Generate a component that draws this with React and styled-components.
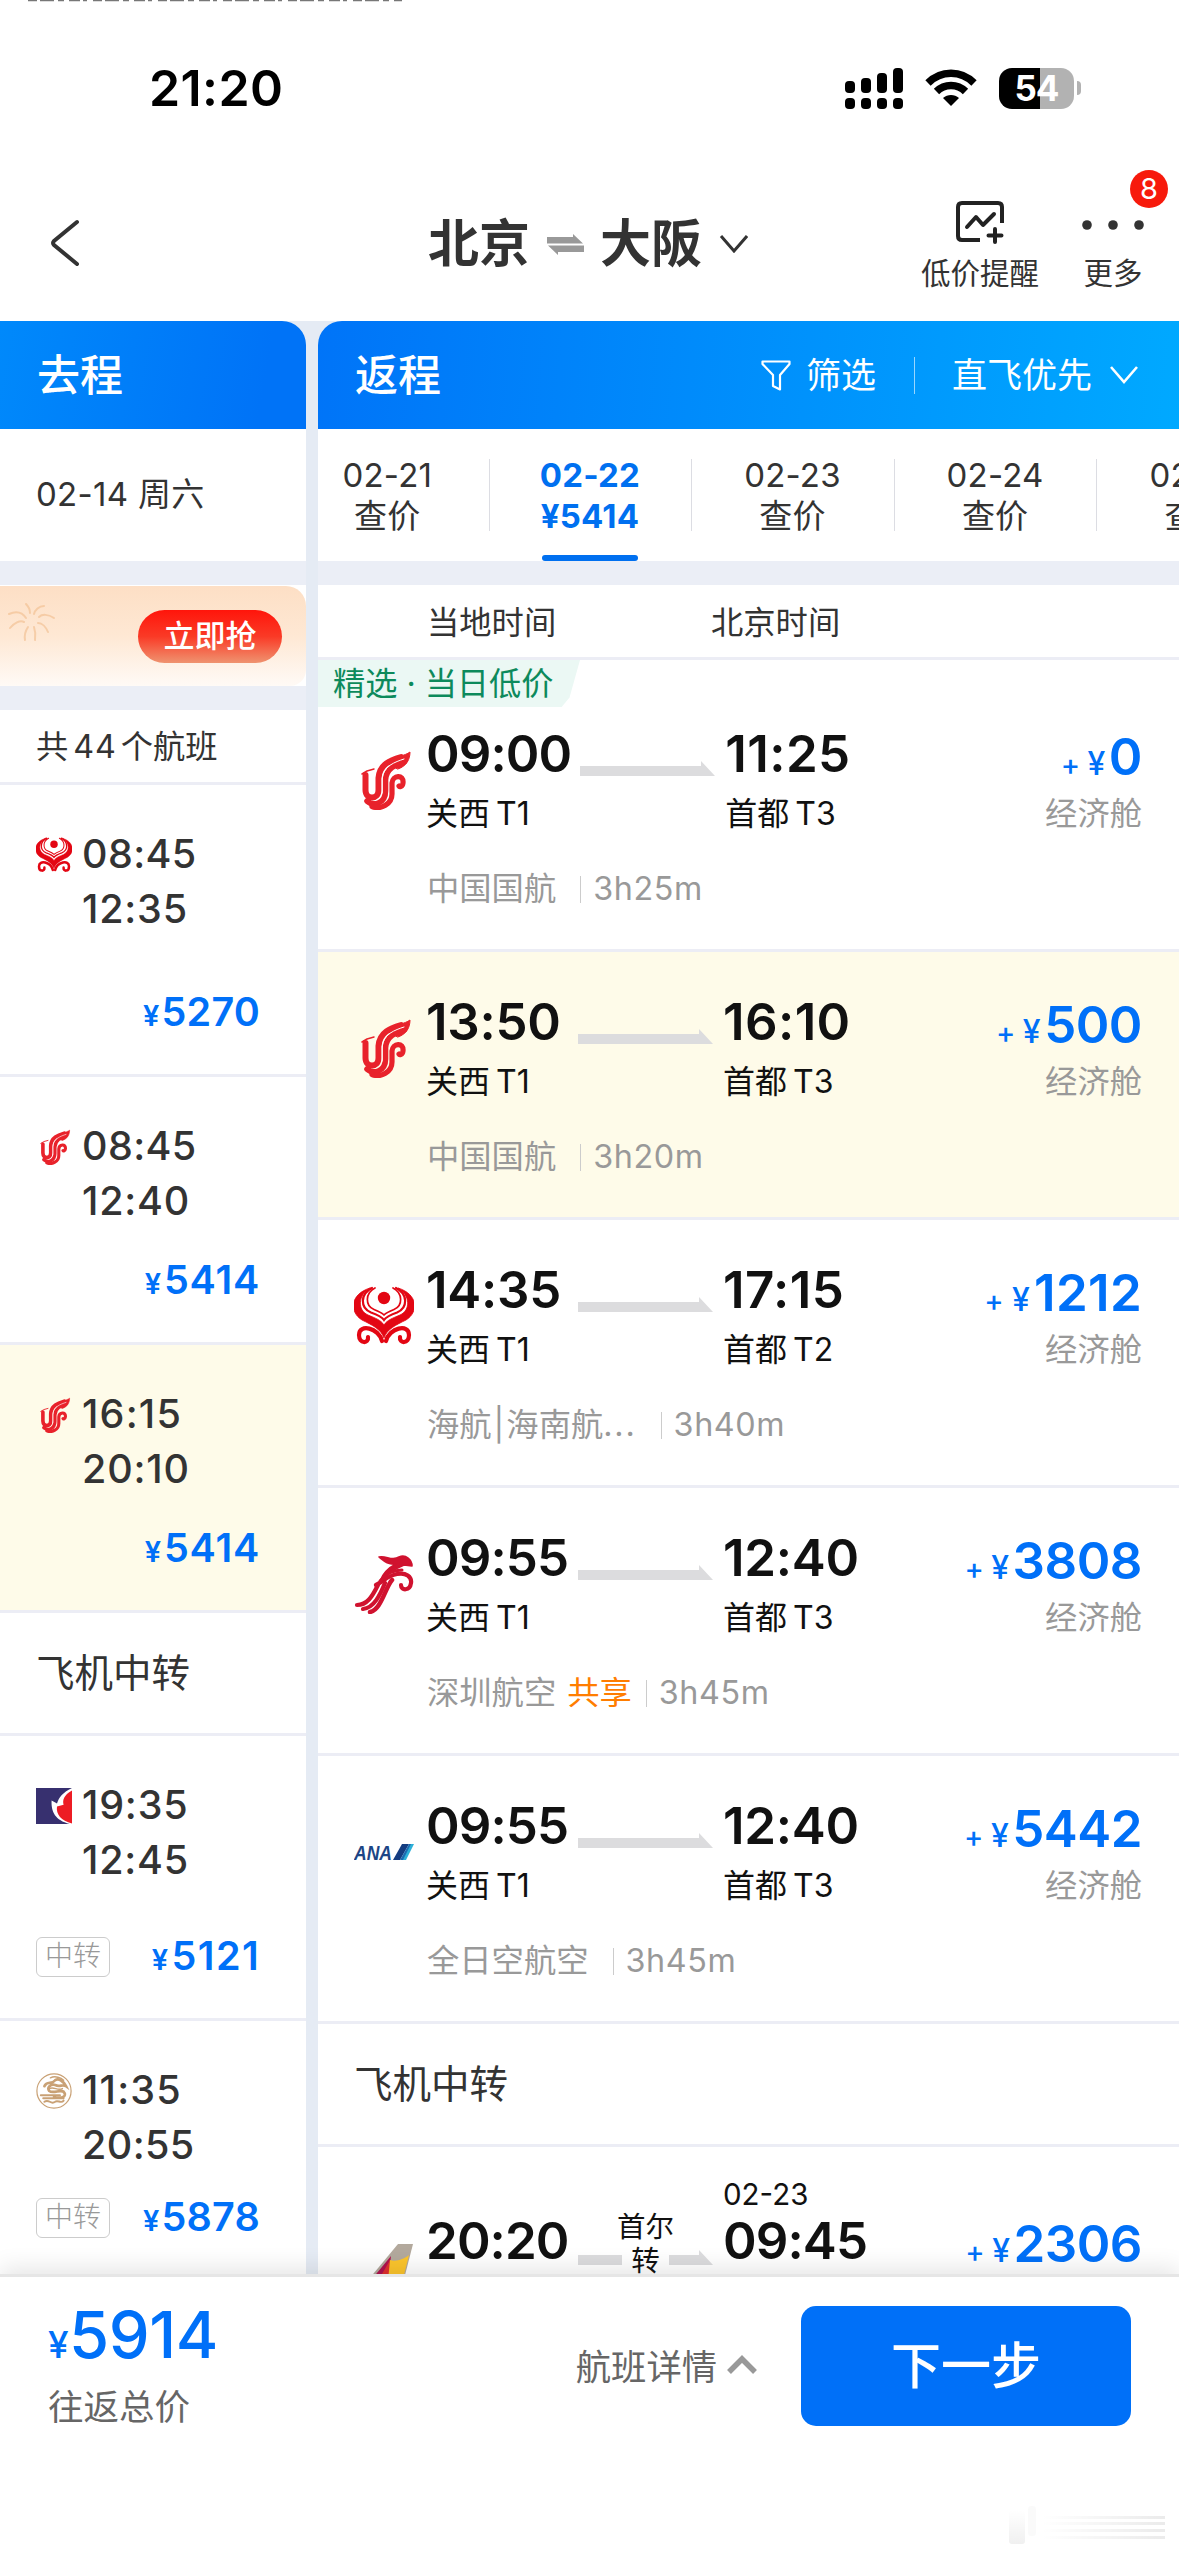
import styled, { createGlobalStyle, css } from "styled-components"

const GlobalStyle = createGlobalStyle`
  * {
    box-sizing: border-box;
  }

  body {
    margin: 0;
    background: #fff;
    font-family: "Inter", "Noto Sans CJK SC", sans-serif;
    color: #333;
  }

  svg {
    display: block;
    flex: none;
  }
`

const Screen = styled.div`
  width: 1179px;
  height: 2556px;
  display: flex;
  flex-direction: column;
  overflow: hidden;
  background: #fff;
  white-space: nowrap;
`

/* status bar */

const StatusBar = styled.div`
  height: 176px;
  display: flex;
  align-items: center;
  justify-content: space-between;
  padding: 0 98px 0 149px;
  position: relative;
`
const TopEdge = styled.svg`
  position: absolute;
  top: 0;
  left: 28px;
`
const Clock = styled.div`
  font-size: 50px;
  font-weight: 600;
  letter-spacing: 0.4px;
  line-height: 60px;
  color: #000;
`
const StatusIcons = styled.div`
  display: flex;
  align-items: center;
  gap: 22px;
`
const Battery = styled.div`
  display: flex;
  align-items: center;
  gap: 3px;

  &::after {
    content: "";
    width: 4px;
    height: 14px;
    border-radius: 0 4px 4px 0;
    background: #b2b2b2;
  }
`
const BatteryBody = styled.div`
  width: 75px;
  height: 41px;
  border-radius: 13px;
  background: linear-gradient(90deg, #000 54.5%, #b2b2b2 54.5%);
  color: #fff;
  font-size: 35px;
  font-weight: 700;
  line-height: 41px;
  letter-spacing: -1px;
  text-align: center;
`

/* nav */

const NavBar = styled.div`
  height: 145px;
  display: grid;
  grid-template-columns: 428px 1fr 258px;
`
const NavBack = styled.div`
  padding: 43px 0 0 49px;
`
const NavTitle = styled.div`
  display: flex;
  align-items: center;
  height: 136px;
  font-size: 51px;
  font-weight: 700;
  line-height: 60px;
`
const SwapIcon = styled.svg`
  margin: 0 16px 0 17px;
`
const NavActions = styled.div`
  display: flex;
  gap: 43px;
`
const NavAction = styled.div`
  display: flex;
  flex-direction: column;
  align-items: center;
  position: relative;
  font-size: 29.5px;
  line-height: 40px;
`
const ActionIcon = styled.div`
  height: 77px;
  display: flex;
  padding-top: ${({ $top }) => $top}px;
`
const Badge = styled.div`
  position: absolute;
  top: -6px;
  left: 48px;
  width: 38px;
  height: 38px;
  border-radius: 50%;
  background: #f71a0c;
  color: #fff;
  font-size: 29px;
  line-height: 38px;
  text-align: center;
`

/* columns */

const Columns = styled.div`
  height: 1953px;
  display: grid;
  grid-template-columns: 306px 861px;
  column-gap: 12px;
  background: #e5ebf4;
  overflow: hidden;
`
const Column = styled.div`
  display: flex;
  flex-direction: column;
  min-width: 0;
  overflow: hidden;
`
const ColumnHead = styled.div`
  flex: none;
  height: 108px;
  display: flex;
  align-items: center;
  padding: 0 41px 0 37px;
  color: #fff;
  border-radius: ${({ $side }) => ($side === "left" ? "0 24px 0 0" : "24px 0 0 0")};
  background: ${({ $side }) =>
    $side === "left"
      ? "linear-gradient(100deg, #0089fb, #0073f7 85%)"
      : "linear-gradient(95deg, #0074f8, #00a9ff)"};
`
const HeadTitle = styled.div`
  font-size: 43px;
  font-weight: 500;
  line-height: 54px;
  margin-right: auto;
`
const HeadTool = styled.div`
  display: flex;
  align-items: center;
  gap: ${({ $gap }) => $gap}px;
  font-size: 35px;
  line-height: 44px;
`
const HeadDivider = styled.div`
  width: 1px;
  height: 37px;
  margin: 0 37px 0 38px;
  background: rgba(255, 255, 255, 0.6);
`
const Gap = styled.div`
  flex: none;
  height: 24px;
  background: #ebeef6;
`
const lined = css`
  flex: none;
  background: #fff;
  border-bottom: 3px solid #ecedf5;
`
const PickedDate = styled.div`
  flex: none;
  height: 132px;
  padding-left: 36px;
  background: #fff;
  font-size: 33px;
  letter-spacing: 0.3px;
  line-height: 131px;
`
const Banner = styled.div`
  flex: none;
  height: 101px;
  padding-top: 1px;
  background: #fff;
`
const BannerBody = styled.div`
  height: 100px;
  display: flex;
  align-items: center;
  justify-content: space-between;
  padding: 0 24px 0 2px;
  border-radius: 0 20px 16px 0;
  background: linear-gradient(#fddfc5, #fee8d4 50%, #fffaf6);
`
const Firework = styled.svg`
  margin-bottom: 26px;
`
const GrabButton = styled.div`
  width: 144px;
  height: 53px;
  border-radius: 27px;
  background: linear-gradient(#ff150b, #fa3a26 50%, #ef9370);
  color: #fff;
  font-size: 31px;
  font-weight: 500;
  line-height: 52px;
  text-align: center;
`
const CountRow = styled.div`
  ${lined}
  height: 75px;
  padding-left: 36px;
  font-size: 32.3px;
  line-height: 74px;

  span {
    margin: 0 4px 0 5px;
    letter-spacing: 0.8px;
  }
`
const SectionTitle = styled.div`
  ${lined}
  height: 123px;
  padding-left: 36px;
  font-size: 38.5px;
  line-height: 121px;
`

/* outbound list */

const OutRow = styled.div`
  ${lined}
  height: ${({ $height }) => $height}px;
  display: flex;
  flex-direction: column;
  justify-content: space-between;
  padding: 42px 46px 37px 36px;
  ${({ $active }) => $active && "background: #fefbe9;"}
`
const OutTimes = styled.div`
  display: grid;
  grid-template-columns: 36px 1fr;
  grid-auto-rows: 55px;
  column-gap: 10px;
  align-items: center;
`
const OutTime = styled.span`
  grid-column: 2;
  font-size: 39.5px;
  font-weight: 550;
  line-height: 55px;
  letter-spacing: ${({ $ones }) => 0.4 + $ones * 0.4}px;
`
const OutFoot = styled.div`
  display: flex;
  align-items: center;
  height: 48px;
`
const TransferTag = styled.div`
  width: 74px;
  height: 40px;
  border: 1px solid #ccc;
  border-radius: 6px;
  color: #999;
  font-size: 28px;
  font-weight: 300;
  line-height: 36px;
  text-align: center;
`
const OutPrice = styled.div`
  margin-left: auto;
  color: #0070f8;
  font-size: 39.5px;
  font-weight: 600;
  line-height: 50px;
  padding-top: 1px;
  letter-spacing: ${({ $ones }) => 0.2 + $ones * 0.6}px;

  small {
    font-size: 29px;
    margin-right: 2px;
  }
`

/* date tabs */

const DateTabs = styled.div`
  flex: none;
  height: 132px;
  display: flex;
  margin-left: -31px;
  background: #fff;
`
const DateTab = styled.div`
  flex: none;
  width: 202.6px;
  height: 132px;
  display: flex;
  flex-direction: column;
  align-items: center;
  padding: 26px 2px 0 0;
  font-size: 33px;
  line-height: 41px;
  letter-spacing: 0.2px;
  background: linear-gradient(#dcdde3, #dcdde3) right 30px / 1px 72px no-repeat;

  ${({ $active }) =>
    $active &&
    css`
      color: #0070f0;
      font-weight: 700;

      &::after {
        content: "";
        width: 96px;
        height: 6px;
        margin-top: 18px;
        border-radius: 3px;
        background: #0070f0;
      }
    `}
`

/* return list */

const ZoneRow = styled.div`
  ${lined}
  height: 75px;
  display: grid;
  grid-template-columns: 284px 1fr;
  padding-left: 109px;
  font-size: 32.3px;
  line-height: 75px;
`
const Pick = styled.div`
  width: 262px;
  height: 47px;
  margin-bottom: -23px;
  padding-left: 15px;
  background: #ebf8f4;
  clip-path: polygon(0 0, 100% 0, 96% 80%, 93% 100%, 0 100%);
  color: #0d8a5c;
  font-size: 32.2px;
  line-height: 47px;

  span {
    margin: 0 9px;
  }
`
const BackRow = styled.div`
  ${lined}
  height: ${({ $first }) => ($first ? 292 : 268)}px;
  ${({ $active }) => $active && "background: #fefbe9;"}
`
const BackBody = styled.div`
  display: grid;
  grid-template-columns: 60px auto auto auto 1fr;
  padding: ${({ $top }) => $top || 40}px 37px 0 36px;
`
const LogoCell = styled.div`
  padding-top: 26px;
`
const Station = styled.div`
  display: flex;
  flex-direction: column;
  min-width: ${({ $min }) => $min || 0}px;
  margin-left: ${({ $left }) => $left || 0}px;
  color: #111;
`
const BigTime = styled.div`
  font-size: 51px;
  font-weight: 600;
  line-height: 60px;
  letter-spacing: ${({ $ones }) => $ones * 0.65 - 0.9}px;
`
const Airport = styled.div`
  font-size: 32px;
  line-height: 60px;
  word-spacing: -3px;
`
const NextDay = styled.div`
  height: 38px;
  margin-top: -38px;
  font-size: 29.5px;
  line-height: 42px;
`
const ArrowCell = styled.div`
  display: flex;
  padding: 37px 10px 0 9px;
`
const StopName = styled.div`
  width: 47px;
  margin-top: -38px;
  display: flex;
  flex-direction: column;
  align-items: center;
  color: #111;
  font-size: 28.5px;
  line-height: 34px;
`
const PriceCell = styled.div`
  text-align: right;
  color: #999;
  font-size: 32.3px;
  line-height: 60px;
`
const BackPrice = styled.div`
  padding-top: 3px;
  height: 60px;
  color: #0070f8;
  font-size: 51px;
  font-weight: 600;
  line-height: 60px;
  letter-spacing: ${({ $ones }) => $ones * 0.4 - 0.5}px;

  small {
    font-size: 32px;
    font-weight: 500;
    margin-right: 4px;
  }

  i {
    font-style: normal;
    font-size: 29px;
    font-weight: 500;
    margin-right: 8px;
  }
`
const Meta = styled.div`
  display: flex;
  align-items: center;
  padding: 24px 0 0 109px;
  color: #999;
  font-size: 32.3px;
  line-height: 42px;
`
const Bar = styled.span`
  margin: 0 2px;
`
const Dots = styled.span`
  letter-spacing: 1.8px;
`
const Shared = styled.span`
  margin-left: 11px;
  color: #ff7d00;
`
const Duration = styled.span`
  display: flex;
  align-items: center;
  margin-left: ${({ $left }) => $left}px;
  letter-spacing: 0.6px;

  &::before {
    content: "";
    width: 1px;
    height: 27px;
    margin-right: 12px;
    background: #ccc;
  }
`

/* bottom bar */

const BottomBar = styled.div`
  height: 282px;
  border-top: 3px solid #e6e6e6;
  background: #fff;
  box-shadow: 0 -6px 22px rgba(0, 0, 0, 0.1);
  display: flex;
  align-items: flex-start;
  padding: 29px 48px;
  position: relative;
`
const Total = styled.div`
  margin-right: auto;
  color: #666;
  font-size: 35.5px;
  line-height: 46px;
`
const TotalPrice = styled.div`
  height: 79px;
  color: #0070f8;
  font-size: 65px;
  font-weight: 500;
  line-height: 58px;
  letter-spacing: -0.5px;

  small {
    font-size: 37px;
    margin-right: 1px;
  }
`
const Details = styled.div`
  display: flex;
  align-items: center;
  gap: 10px;
  height: 117px;
  margin-right: 44px;
  color: #666;
  font-size: 35.3px;
`
const NextButton = styled.div`
  width: 330px;
  height: 120px;
  border-radius: 15px;
  background: #0070f8;
  color: #fff;
  font-size: 50px;
  font-weight: 500;
  line-height: 120px;
  text-align: center;
`
const Smudge = styled.svg`
  position: absolute;
  right: 8px;
  bottom: 10px;
`

/* airline marks, all drawn in a 60 x 60 box */

const AirChina = () => (
  <g fill="none" stroke="#e8222b" strokeLinecap="round" strokeLinejoin="round">
    <path d="M8 24L13 21L20 19" strokeWidth="1.5" />
    <path d="M11.5 25V40C11.5 50 24.5 50 24.5 40V28C25.5 14 37 10 47 7" strokeWidth="6" />
    <path d="M13 51C20 57 31.5 53 31.5 41V30C32 18 42 14.5 50 12" strokeWidth="5.6" />
    <path d="M18 56.5C27 60 38 54 38 44V33C38.5 25 50 24 49 33C48.5 37 45.5 37 45 36" strokeWidth="5.2" />
    <path d="M34 13C41 6 51 6 56 2C56 9 53 16 44 19Z" fill="#e8222b" strokeWidth="1" />
    <path d="M28.2 43V29C29 16 41 12 50 9" stroke="#fff" strokeWidth="1" />
  </g>
)

const Hainan = () => (
  <g fill="none" stroke="#e30613" strokeLinecap="round">
    <path
      d="M16 2C-4 8 -5 26 8 34C18 39 27 43 30 52C33 43 42 39 52 34C65 26 64 8 44 2C56 9 57 24 46 29C39 32 33 34 30 39C27 34 21 32 14 29C3 24 4 9 16 2Z"
      fill="#e30613"
      strokeWidth="0.8"
    />
    <path d="M18 2C6 8 6 22 17 26.5C24 29 28 31 30 34C32 31 36 29 43 26.5C54 22 54 8 42 2" strokeWidth="2.2" />
    <path d="M21 2C11 7 11 20 20 23.5C25 25.5 28 27 30 29C32 27 35 25.5 40 23.5C49 20 49 7 39 2" strokeWidth="1.7" />
    <circle cx="30" cy="12" r="6.2" fill="#e30613" stroke="none" />
    <path d="M28 55C25 42 5 37 5 49C5 58 15 58 14 51" strokeWidth="4.2" />
    <path d="M32 55C35 42 55 37 55 49C55 58 45 58 46 51" strokeWidth="4.2" />
  </g>
)

const Shenzhen = () => (
  <g fill="none" stroke="#d0122f" strokeLinecap="round" strokeLinejoin="round">
    <path d="M25 3C32 1 38 8 45 3C52 0 58 6 58 12L50 11C43 14 34 18 26 27C30 17 36 13 42 10C34 11 30 7 25 3Z" fill="#d0122f" strokeWidth="1.6" />
    <path d="M22 31C30 27 33 22 43 20C52 18 58 23 57 29C56 37 47 37 47 31" strokeWidth="4.2" />
    <path d="M48 16C40 16 32 20 26 27" strokeWidth="3" />
    <path d="M24 31C18 43 13 51 3 51" strokeWidth="4.2" />
    <path d="M31 29C26 41 20 54 9 55" strokeWidth="4.2" />
    <path d="M38 26C31 34 27 56 16 58" strokeWidth="4.5" />
  </g>
)

const Ana = () => (
  <g>
    <text
      x="0"
      y="37.5"
      fill="#1c4585"
      fontFamily="Liberation Sans, sans-serif"
      fontSize="21"
      fontStyle="italic"
      fontWeight="700"
      textLength="38"
      lengthAdjust="spacingAndGlyphs"
    >
      ANA
    </text>
    <path d="M39 38L48 22H55L46 38Z" fill="#143c80" />
    <path d="M48 38L56 22H60L52 38Z" fill="#2cb0d8" />
    <path d="M46 38L55 22H57L49 38Z" fill="#1b6bb0" />
  </g>
)

const Macau = () => (
  <g>
    <rect width="60" height="60" fill="#37306f" />
    <path d="M60 0C44 8 38 16 35 26L26 21C25 40 32 54 56 60H60Z" fill="#fff" />
    <path d="M60 4C46 12 44 20 46 28L35 31C33 44 42 55 60 59Z" fill="#ed1c24" />
  </g>
)

const Juneyao = () => (
  <g fill="none" stroke="#c9a175" strokeLinecap="round">
    <circle cx="30" cy="30" r="28.5" strokeWidth="2" />
    <path d="M14 22C18 12 26 20 32 12C38 8 46 14 50 22C44 18 40 24 32 20C24 18 18 24 22 30C30 36 44 24 48 34C50 42 38 42 30 40" strokeWidth="4.5" />
    <path d="M8 37H40M12 42H46M14 48C22 42 24 54 32 48C36 44 42 52 46 46" strokeWidth="3.2" />
    <path d="M24 8C32 4 42 8 46 12M22 26C30 22 36 30 44 26" strokeWidth="2.5" />
  </g>
)

const Asiana = () => (
  <g>
    <path d="M10 48L44 7H59L48 50H10Z" fill="#b3a99d" />
    <path d="M18 42L37 19L34 44L8 46Z" fill="#b0124e" />
    <path d="M36 23C42 25 50 22 55 18L48 46H28Z" fill="#fcc52c" />
    <path d="M24 44L36 23L34 44Z" fill="#e0312f" />
  </g>
)

const marks = {
  airchina: AirChina,
  hainan: Hainan,
  shenzhen: Shenzhen,
  ana: Ana,
  macau: Macau,
  juneyao: Juneyao,
  asiana: Asiana,
}

const Logo = ({ name, size }) => {
  const Mark = marks[name]
  return (
    <svg width={size} height={size} viewBox="0 0 60 60">
      <Mark />
    </svg>
  )
}

const outbound = [
  { logo: "hainan", dep: "08:45", arr: "12:35", price: "5270", height: 292 },
  { logo: "airchina", dep: "08:45", arr: "12:40", price: "5414", height: 268 },
  { logo: "airchina", dep: "16:15", arr: "20:10", price: "5414", height: 268, active: true },
]

const outboundTransfer = [
  { logo: "macau", dep: "19:35", arr: "12:45", price: "5121", height: 285, transfer: true },
  { logo: "juneyao", dep: "11:35", arr: "20:55", price: "5878", height: 261, transfer: true },
]

const dates = [
  { day: "02-21", price: "查价" },
  { day: "02-22", price: "¥5414", active: true },
  { day: "02-23", price: "查价" },
  { day: "02-24", price: "查价" },
  { day: "02-25", price: "查价" },
]

const inbound = [
  { logo: "airchina", dep: "09:00", arr: "11:25", to: "首都 T3", price: "0", airline: "中国国航", time: "3h25m", pick: true },
  { logo: "airchina", dep: "13:50", arr: "16:10", to: "首都 T3", price: "500", airline: "中国国航", time: "3h20m", active: true },
  {
    logo: "hainan",
    dep: "14:35",
    arr: "17:15",
    to: "首都 T2",
    price: "1212",
    airline: (
      <span>
        海航<Bar>|</Bar>海南航<Dots>...</Dots>
      </span>
    ),
    time: "3h40m",
  },
  { logo: "shenzhen", dep: "09:55", arr: "12:40", to: "首都 T3", price: "3808", airline: "深圳航空", time: "3h45m", shared: true },
  { logo: "ana", dep: "09:55", arr: "12:40", to: "首都 T3", price: "5442", airline: "全日空航空", time: "3h45m" },
]

// the figure 1 is narrow, numbers that hold it get a little more tracking
const ones = (value) => value.split("1").length - 1

const OutFlight = ({ flight }) => (
  <OutRow $height={flight.height} $active={flight.active}>
    <OutTimes>
      <Logo name={flight.logo} size={36} />
      <OutTime $ones={ones(flight.dep)}>{flight.dep}</OutTime>
      <OutTime $ones={ones(flight.arr)}>{flight.arr}</OutTime>
    </OutTimes>
    <OutFoot>
      {flight.transfer && <TransferTag>中转</TransferTag>}
      <OutPrice $ones={ones(flight.price)}>
        <small>¥</small>
        {flight.price}
      </OutPrice>
    </OutFoot>
  </OutRow>
)

const Time = ({ value }) => <BigTime $ones={ones(value)}>{value}</BigTime>

const Price = ({ value }) => (
  <BackPrice $ones={ones(value)}>
    <i>+</i>
    <small>¥</small>
    {value}
  </BackPrice>
)

const BackFlight = ({ flight }) => (
  <BackRow $first={flight.pick} $active={flight.active}>
    {flight.pick && (
      <Pick>
        精选<span>·</span>当日低价
      </Pick>
    )}
    <BackBody>
      <LogoCell>
        <Logo name={flight.logo} size={60} />
      </LogoCell>
      <Station $min={143} $left={12}>
        <Time value={flight.dep} />
        <Airport>关西 T1</Airport>
      </Station>
      <ArrowCell>
        <svg width="135" height="16" viewBox="0 0 135 16">
          <path d="M0 5H121V0L135 15H0Z" fill="#dcdcde" />
        </svg>
      </ArrowCell>
      <Station>
        <Time value={flight.arr} />
        <Airport>{flight.to}</Airport>
      </Station>
      <PriceCell>
        <Price value={flight.price} />
        经济舱
      </PriceCell>
    </BackBody>
    <Meta>
      {flight.airline}
      {flight.shared && <Shared>共享</Shared>}
      <Duration $left={flight.shared ? 14 : 24}>{flight.time}</Duration>
    </Meta>
  </BackRow>
)

const Signal = () => (
  <svg width="58" height="41" viewBox="0 0 58 41">
    {[13, 10, 5, 0].map((top, i) => (
      <g key={top}>
        <rect x={i * 16} y={top} width="10" height={25 - top} rx="4" />
        <rect x={i * 16} y="30" width="10" height="11" rx="4" />
      </g>
    ))}
  </svg>
)

const Wifi = () => (
  <svg width="52" height="38" viewBox="0 0 52 38">
    <path d="M3 14C16 1 36 1 49 14" fill="none" stroke="#000" strokeWidth="7.5" />
    <path d="M11.5 22.5C19.5 14.5 32.5 14.5 40.5 22.5" fill="none" stroke="#000" strokeWidth="7.5" />
    <path d="M18 29C22.5 25 29.5 25 34 29L26 37Z" />
  </svg>
)

const App = () => {
  return (
    <Screen>
      <GlobalStyle />
      <StatusBar>
        <TopEdge width="374" height="2">
          <path d="M0 0.5H374" stroke="#777" strokeWidth="1.5" strokeDasharray="9 3 14 4 6 5 11 3 4 6" />
        </TopEdge>
        <Clock>21:20</Clock>
        <StatusIcons>
          <Signal />
          <Wifi />
          <Battery>
            <BatteryBody>54</BatteryBody>
          </Battery>
        </StatusIcons>
      </StatusBar>

      <NavBar>
        <NavBack>
          <svg width="32" height="48" viewBox="0 0 32 48" fill="none" stroke="#333" strokeWidth="4" strokeLinecap="round">
            <path d="M28 3L5 22Q3 24 5 26L28 45" />
          </svg>
        </NavBack>
        <NavTitle>
          北京
          <SwapIcon width="37" height="21" viewBox="0 0 37 21" fill="#999">
            <path d="M0 3H26V0L36 9.5H0Z" />
            <path d="M37 18H11V21L1 11.5H37Z" />
          </SwapIcon>
          大阪
          <svg width="46" height="18" viewBox="-18 0 46 18" fill="none" stroke="#333" strokeWidth="3">
            <path d="M1 1L14 16L27 1" />
          </svg>
        </NavTitle>
        <NavActions>
          <NavAction>
            <ActionIcon $top={25}>
              <svg width="48" height="44" viewBox="0 0 48 44" fill="none" stroke="#222" strokeWidth="4" strokeLinecap="round" strokeLinejoin="round">
                <path d="M46 22V6Q46 2 42 2H6Q2 2 2 6V35Q2 39 6 39H24" strokeLinecap="butt" />
                <path d="M11 26L20 16L27 24L38 13M39 28V41M32.5 34.5H45.5" />
              </svg>
            </ActionIcon>
            低价提醒
          </NavAction>
          <NavAction>
            <ActionIcon $top={44}>
              <svg width="62" height="10" viewBox="0 0 62 10" fill="#333">
                <circle cx="5" cy="5" r="4.8" />
                <circle cx="31" cy="5" r="4.8" />
                <circle cx="57" cy="5" r="4.8" />
              </svg>
            </ActionIcon>
            更多
            <Badge>8</Badge>
          </NavAction>
        </NavActions>
      </NavBar>

      <Columns>
        <Column>
          <ColumnHead $side="left">
            <HeadTitle>去程</HeadTitle>
          </ColumnHead>
          <PickedDate>02-14 周六</PickedDate>
          <Gap />
          <Banner>
            <BannerBody>
              <Firework width="60" height="50" viewBox="0 0 60 50" fill="none" stroke="#f2bd8c" strokeWidth="2" strokeLinecap="round" opacity="0.6">
                <path d="M24 20C20 14 14 13 7 16M22 24C18 22 12 25 8 30M28 15C28 11 26 8 24 6M32 16C33 12 37 8 42 8M37 19C40 16 46 16 52 20M36 25C40 25 44 29 46 34M26 29C24 32 22 36 23 42M32 29C33 32 34 36 33 42" />
              </Firework>
              <GrabButton>立即抢</GrabButton>
            </BannerBody>
          </Banner>
          <Gap />
          <CountRow>
            共<span>44</span>个航班
          </CountRow>
          {outbound.map((flight, i) => (
            <OutFlight key={i} flight={flight} />
          ))}
          <SectionTitle>飞机中转</SectionTitle>
          {outboundTransfer.map((flight) => (
            <OutFlight key={flight.price} flight={flight} />
          ))}
        </Column>

        <Column>
          <ColumnHead $side="right">
            <HeadTitle>返程</HeadTitle>
            <HeadTool $gap={15}>
              <svg width="30" height="31" viewBox="0 0 30 31" fill="none" stroke="#fff" strokeWidth="2.2" strokeLinejoin="round">
                <path d="M1.5 1.5H28.5V4L19 15V29.5L12 26V15L1.5 4Z" />
              </svg>
              筛选
            </HeadTool>
            <HeadDivider />
            <HeadTool $gap={18}>
              直飞优先
              <svg width="28" height="18" viewBox="0 0 28 18" fill="none" stroke="#fff" strokeWidth="2.6">
                <path d="M1 1L14 16L27 1" />
              </svg>
            </HeadTool>
          </ColumnHead>
          <DateTabs>
            {dates.map((date) => (
              <DateTab key={date.day} $active={date.active}>
                <span>{date.day}</span>
                <span>{date.price}</span>
              </DateTab>
            ))}
          </DateTabs>
          <Gap />
          <ZoneRow>
            <span>当地时间</span>
            <span>北京时间</span>
          </ZoneRow>
          {inbound.map((flight) => (
            <BackFlight key={flight.price} flight={flight} />
          ))}
          <SectionTitle>飞机中转</SectionTitle>
          <BackRow>
            <BackBody $top={64}>
              <LogoCell>
                <Logo name="asiana" size={60} />
              </LogoCell>
              <Station $min={143} $left={12}>
                <Time value="20:20" />
              </Station>
              <ArrowCell>
                <svg width="44" height="18" viewBox="0 0 44 18">
                  <path d="M0 7H44V17H0Z" fill="#dcdcde" />
                </svg>
                <StopName>
                  <span>首尔</span>
                  <span>转</span>
                </StopName>
                <svg width="44" height="18" viewBox="0 0 44 18">
                  <path d="M0 7H30V2L44 17H0Z" fill="#dcdcde" />
                </svg>
              </ArrowCell>
              <Station>
                <NextDay>02-23</NextDay>
                <Time value="09:45" />
              </Station>
              <PriceCell>
                <Price value="2306" />
              </PriceCell>
            </BackBody>
          </BackRow>
        </Column>
      </Columns>

      <BottomBar>
        <Total>
          <TotalPrice>
            <small>¥</small>
            5914
          </TotalPrice>
          往返总价
        </Total>
        <Details>
          航班详情
          <svg width="30" height="19" viewBox="0 0 30 19" fill="none" stroke="#999" strokeWidth="5.5">
            <path d="M2 17L15 4L28 17" />
          </svg>
        </Details>
        <NextButton>下一步</NextButton>
        <Smudge width="164" height="42" viewBox="0 0 164 42">
          <defs>
            <linearGradient id="fade">
              <stop offset="0" stopColor="#000" stopOpacity="0" />
              <stop offset="1" stopColor="#000" stopOpacity="0.08" />
            </linearGradient>
            <linearGradient id="drop" x2="0" y2="1">
              <stop offset="0" stopColor="#000" stopOpacity="0" />
              <stop offset="1" stopColor="#000" stopOpacity="0.06" />
            </linearGradient>
          </defs>
          <rect x="2" y="6" width="16" height="34" rx="3" fill="url(#drop)" />
          <rect x="21" y="2" width="8" height="30" rx="3" fill="#000" opacity="0.02" />
          <g fill="url(#fade)">
            <rect x="34" y="12" width="124" height="3" />
            <rect x="34" y="18" width="124" height="3" />
            <rect x="34" y="25" width="124" height="3" />
            <rect x="34" y="32" width="124" height="3" />
          </g>
        </Smudge>
      </BottomBar>
    </Screen>
  )
}

export default App
